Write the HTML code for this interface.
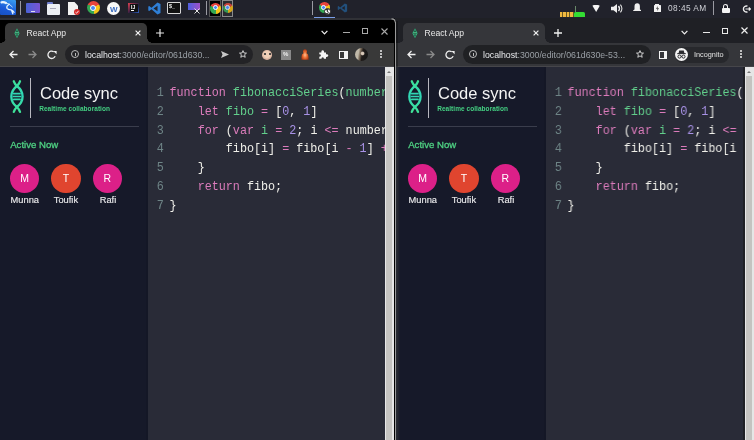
<!DOCTYPE html>
<html><head><meta charset="utf-8">
<style>
*{margin:0;padding:0;box-sizing:border-box}
html,body{width:754px;height:440px;overflow:hidden;background:#21222b;font-family:"Liberation Sans",sans-serif;position:relative;-webkit-font-smoothing:antialiased}
.win,.a{will-change:transform}
.a{position:absolute}
.win{position:absolute;overflow:hidden}
#w1{left:-2px;top:18px;width:398px;height:422px;background:#000;border-top-right-radius:3.5px}
#w2{left:396px;top:18px;width:358px;height:422px;background:#1f2025}
.tab{position:absolute;top:5px;left:7px;width:142px;height:20px;background:#393939;border-radius:5px 5px 0 0}
.tt{position:absolute;left:28.5px;top:9.5px;font-size:8.6px;color:#e8e8e8;white-space:nowrap}
.toolbar{position:absolute;left:0;right:0;top:24.5px;height:24.5px;background:#393939;border-bottom:1px solid #46464a}
.omni{position:absolute;left:67px;top:2.8px;width:187.5px;height:18.6px;background:#232326;border-radius:10px}
.url{position:absolute;left:20px;top:4.3px;font-size:8.76px;color:#9aa0a6;white-space:nowrap}
.url b{font-weight:normal;color:#e8eaed}
.content{position:absolute;left:0;right:0;top:49px;bottom:0;background:#292b37}
.side{position:absolute;left:0;top:0;bottom:0;width:148px;background:#161929}
.side2{position:absolute;left:148px;top:0;bottom:0;width:2px;background:#141726}
.code{position:absolute;left:160px;top:16.7px;font-family:"Liberation Mono",monospace;font-size:12.3px;transform:scaleX(0.954);transform-origin:0 0;line-height:18.9px;white-space:pre;color:#f0f0ea}
.ln{color:#6e8486;display:inline-block;width:12.05px;position:relative;left:-1.2px}
.k{color:#dc7cbc}
.d{color:#62cf8c}
.n{color:#a892e6}
.scroll{position:absolute;top:49px;bottom:0;width:9px;background:#e6e6e6}
.thumb{position:absolute;left:1px;right:2px;top:9px;bottom:0;background:#c4c3c0}
.ua{position:absolute;left:2.3px;top:4px;width:0;height:0;border-left:2.4px solid transparent;border-right:2.4px solid transparent;border-bottom:2.4px solid #777}
.logo-t{position:absolute;left:42px;top:16.8px;font-size:16.5px;color:#f4f4f4;white-space:nowrap}
.logo-s{position:absolute;left:41.2px;top:37.7px;font-size:6.5px;font-weight:bold;color:#44d083;letter-spacing:0.05px;white-space:nowrap}
.vl{position:absolute;left:32px;top:11px;width:1.3px;height:40px;background:#b8b8c0}
.hr{position:absolute;left:12px;top:58.6px;width:129px;height:1px;background:#3a3d4c}
.an{position:absolute;left:12.2px;top:71.5px;font-size:9.6px;color:#4fd283;-webkit-text-stroke:0.3px #4fd283;white-space:nowrap}
.av{position:absolute;top:96.5px;width:29.6px;height:29.6px;border-radius:50%;color:#fff;font-size:10.5px;text-align:center;line-height:29.6px}
.nm{position:absolute;top:128px;font-size:9.3px;color:#e8e8ea;-webkit-text-stroke:0.15px #e8e8ea;white-space:nowrap}
.ico{position:absolute}
</style></head><body>

<!-- ============ TASKBAR ============ -->
<div class="a" style="left:0;top:0;width:15.5px;height:15px;background:linear-gradient(200deg,#3aa0f0,#1a5ad8 60%,#1850c0);border-radius:1px"></div>
<svg class="a" style="left:0;top:0" width="16" height="16" viewBox="0 0 16 16"><path d="M1.5 2.3 Q4 1.8 6 3" stroke="#e8f4ff" stroke-width="2.2" fill="none" stroke-linecap="round"/><path d="M5.5 2.8 Q9 3 12.6 7.2" stroke="#d0ecff" stroke-width="0.9" fill="none"/><path d="M9.3 4.2 Q6 6 7 8.3 Q8 9.6 11 9.8 Q13 10.3 14 12.3 M11.5 10 L12.8 13.8" stroke="#e0f2ff" stroke-width="1.3" fill="none" stroke-linecap="round"/></svg>
<div class="a" style="left:19.8px;top:1.2px;width:1px;height:14.3px;background:#9a9aa2"></div>
<div class="a" style="left:26.3px;top:3.2px;width:13.5px;height:9.5px;background:linear-gradient(90deg,#4a62d8,#7a54d0);border-radius:1px"></div>
<div class="a" style="left:31px;top:10.5px;width:3.5px;height:1px;background:#dde"></div>
<div class="a" style="left:47px;top:3.5px;width:12.7px;height:10.5px;background:#eceff4;border-radius:1px"></div>
<div class="a" style="left:47px;top:2px;width:6px;height:2px;background:#6f7fd0;border-radius:1px 1px 0 0"></div>
<div class="a" style="left:50px;top:7.5px;width:6px;height:1px;background:#aab"></div>
<div class="a" style="left:68px;top:2px;width:10px;height:12.9px;background:#f2f2f2;clip-path:polygon(0 0,65% 0,100% 30%,100% 100%,0 100%)"></div>
<div class="a" style="left:74.2px;top:8.6px;width:6px;height:6px;background:#d42a2a;border-radius:50%"></div><svg class="a" style="left:74.2px;top:8.6px" width="6" height="6" viewBox="0 0 6 6"><path d="M1.5 3.2 L2.6 4.2 L4.6 1.8" stroke="#fff" stroke-width="0.9" fill="none"/></svg>
<div class="a" style="left:86.9px;top:1.4px;width:13px;height:13px;border-radius:50%;background:conic-gradient(from 0deg,#e8453c 0 60deg,#f5c518 60deg 180deg,#34a853 180deg 300deg,#e8453c 300deg)"></div>
<div class="a" style="left:90.4px;top:4.9px;width:6px;height:6px;border-radius:50%;background:#4a8af4;border:1.2px solid #fff"></div>
<div class="a" style="left:106.9px;top:1.5px;width:13px;height:13px;border-radius:50%;background:#f8f8f8"></div>
<div class="a" style="left:109.5px;top:5px;font-size:8px;font-weight:bold;color:#3a6cc0">W</div>
<div class="a" style="left:127.8px;top:2.8px;width:11px;height:10.2px;background:linear-gradient(135deg,#e04050,#1a1a40 60%,#3060c0)"></div>
<div class="a" style="left:129.5px;top:4.2px;width:7.5px;height:7.5px;background:#111"></div>
<div class="a" style="left:130.5px;top:3.8px;font-size:5px;font-weight:bold;color:#fff">IJ</div>
<div class="a" style="left:130.5px;top:10px;width:3px;height:.8px;background:#fff"></div>
<svg class="a" style="left:147.5px;top:2px" width="13" height="13" viewBox="0 0 13 13"><path d="M9.5 0.5 L12.5 2 V11 L9.5 12.5 L3.5 7.2 L1.2 9 L0.3 8.4 V4.6 L1.2 4 L3.5 5.8 Z M9.5 3.8 L5.5 6.5 L9.5 9.2 Z" fill="#2f7fd6" fill-rule="evenodd"/></svg>
<div class="a" style="left:166.8px;top:1.9px;width:13.9px;height:12px;background:#111;border:1.2px solid #d8d8d8;border-radius:1px"></div>
<div class="a" style="left:168.8px;top:2.5px;font-size:5.5px;font-weight:bold;color:#eee">$_</div>
<div class="a" style="left:187.8px;top:3.2px;width:12.2px;height:7px;background:linear-gradient(90deg,#5060e0,#a050c8)"></div>
<svg class="a" style="left:194px;top:8px" width="6" height="6" viewBox="0 0 6 6"><path d="M0.5 0.5 L5.5 5.5 M5.5 0.5 L0.5 5.5" stroke="#e0e0e0" stroke-width="1"/></svg>
<div class="a" style="left:206px;top:1.2px;width:1px;height:14.3px;background:#9a9aa2"></div>
<div class="a" style="left:209.3px;top:0;width:12px;height:16.7px;background:#000;border:0.8px solid #555"></div>
<div class="a" style="left:210px;top:2.6px;width:10.5px;height:10.5px;border-radius:50%;background:conic-gradient(from 0deg,#e8453c 0 60deg,#f5c518 60deg 180deg,#34a853 180deg 300deg,#e8453c 300deg)"></div>
<div class="a" style="left:212.8px;top:5.4px;width:5px;height:5px;border-radius:50%;background:#4a8af4;border:1px solid #fff"></div>
<div class="a" style="left:222px;top:0;width:10.7px;height:16.7px;background:#2a2b30;border:0.8px solid #8a8a8a"></div>
<div class="a" style="left:222.5px;top:2.6px;width:10px;height:10px;border-radius:50%;background:conic-gradient(from 0deg,#c8453c 0 60deg,#d5a518 60deg 180deg,#349853 180deg 300deg,#c8453c 300deg)"></div>
<div class="a" style="left:225.2px;top:5.2px;width:4.8px;height:4.8px;border-radius:50%;background:#4a8af4;border:1px solid #ddd"></div>
<div class="a" style="left:311.6px;top:1.2px;width:1px;height:14.3px;background:#9a9aa2"></div>
<div class="a" style="left:318.5px;top:2.4px;width:10.5px;height:10.5px;border-radius:50%;background:conic-gradient(from 0deg,#e8453c 0 60deg,#f5c518 60deg 180deg,#34a853 180deg 300deg,#e8453c 300deg)"></div>
<div class="a" style="left:321.3px;top:5.2px;width:5px;height:5px;border-radius:50%;background:#4a8af4;border:1px solid #fff"></div>
<div class="a" style="left:323.6px;top:7.6px;width:7.4px;height:7.4px;border-radius:50%;background:#fff;border:0.8px solid #222"></div><svg class="a" style="left:325.3px;top:9.3px" width="4" height="5" viewBox="0 0 4 5"><path d="M0.5 0.6 H3.2 L1.8 2.1 Q3.4 2.2 3.3 3.4 Q3.2 4.6 1.8 4.6 Q0.8 4.6 0.4 4" stroke="#111" stroke-width="0.9" fill="none"/></svg>
<div class="a" style="left:314px;top:16.5px;width:20.6px;height:1.2px;background:#7a9ee8"></div>
<svg class="a" style="left:337.4px;top:3.3px" width="11" height="10" viewBox="0 0 13 13"><path d="M9.5 0.5 L12.5 2 V11 L9.5 12.5 L3.5 7.2 L1.2 9 L0.3 8.4 V4.6 L1.2 4 L3.5 5.8 Z M9.5 3.8 L5.5 6.5 L9.5 9.2 Z" fill="#22507c" fill-rule="evenodd"/></svg>
<!-- tray -->
<div class="a" style="left:559.5px;top:12px;width:14px;height:5px;background:repeating-linear-gradient(90deg,#f0b840 0 2.5px,#6a5a20 2.5px 3.5px)"></div>
<div class="a" style="left:574px;top:11.8px;width:10.6px;height:5.3px;background:#33dd33;border-radius:1.5px 1.5px 0 0"></div>
<div class="a" style="left:575.2px;top:6.4px;width:.7px;height:6px;background:#6a8a6a"></div>
<div class="a" style="left:591.8px;top:4.8px;width:8.3px;height:7px;background:#f4f4f4;clip-path:polygon(0 0,100% 0,50% 100%);border-radius:2px"></div>
<svg class="a" style="left:611px;top:4.4px" width="12" height="9" viewBox="0 0 12 9"><path d="M0 2.8 H2.5 L6 0 V9 L2.5 6.2 H0 Z" fill="#eee"/><path d="M7.5 2 Q9.4 4.5 7.5 7" stroke="#eee" stroke-width="1.4" fill="none"/><path d="M9.4 0.6 Q12.4 4.5 9.4 8.4" stroke="#ddd" stroke-width="1.1" fill="none"/></svg>
<svg class="a" style="left:632.8px;top:3.2px" width="8.4" height="8" viewBox="0 0 8.4 8"><path d="M1.5 6.5 V3.5 Q1.5 0.3 4.2 0.3 Q6.9 0.3 6.9 3.5 V6.5 L8.2 7.2 V7.9 H0.2 V7.2 Z" fill="#eee"/></svg>
<div class="a" style="left:653.5px;top:4.6px;width:6.8px;height:7.4px;background:#f2f2f2;border-radius:.5px"></div>
<div class="a" style="left:655px;top:4px;width:3.8px;height:1px;background:#f2f2f2"></div>
<svg class="a" style="left:654.5px;top:6px" width="5" height="5" viewBox="0 0 5 5"><path d="M3 0 L1 2.8 H2.6 L2 5 L4 2.2 H2.4 Z" fill="#222"/></svg>
<div class="a" style="left:667.5px;top:3.3px;font-size:8.3px;letter-spacing:0.45px;color:#cfd0d6;white-space:nowrap">08:45 AM</div>
<div class="a" style="left:713.2px;top:1.2px;width:1px;height:14.3px;background:#9a9aa2"></div>
<div class="a" style="left:721.7px;top:7.6px;width:8.1px;height:4.9px;background:#f4f4f4;border-radius:1px"></div>
<div class="a" style="left:723.2px;top:4.2px;width:5.1px;height:5px;border:1.3px solid #f4f4f4;border-bottom:none;border-radius:3px 3px 0 0"></div>
<svg class="a" style="left:742px;top:5.2px" width="9" height="8" viewBox="0 0 9 8"><path d="M5.5 1.2 A3 3 0 1 0 5.5 6.8" stroke="#eee" stroke-width="1.4" fill="none"/><path d="M3.5 4 H8.5 M6.8 2.5 L8.5 4 L6.8 5.5" stroke="#eee" stroke-width="1.2" fill="none"/></svg>

<!-- ============ LEFT WINDOW ============ -->
<div id="w1" class="win">
  <div class="a" style="left:0;top:0;right:0;height:1.6px;background:#303136"></div>
  <div class="tab"></div>
  <div class="a" style="left:149px;top:21px;width:3.5px;height:3.5px;background:radial-gradient(circle at 100% 0,#000 3.3px,#393939 3.6px)"></div>
  <div class="a" style="left:3.5px;top:21px;width:3.5px;height:3.5px;background:radial-gradient(circle at 0 0,#000 3.3px,#393939 3.6px)"></div>
  <svg class="ico" style="left:15.8px;top:9.8px" width="6" height="10.5" viewBox="0 0 6 10.5"><path d="M3 0.3 L5.6 5.25 L3 10.2 L0.4 5.25 Z" fill="#2fae78"/><path d="M3 1.8 L4.4 5.25 L3 8.7 L1.6 5.25 Z" fill="#1c3a30"/><path d="M1.5 4.5 H4.5 M1.5 6 H4.5" stroke="#5fe0a0" stroke-width=".7"/></svg>
  <div class="tt">React App</div>
  <svg class="ico" style="left:136.8px;top:11.6px" width="6" height="6" viewBox="0 0 6 6"><path d="M0.6 0.6 L5.4 5.4 M5.4 0.6 L0.6 5.4" stroke="#eee" stroke-width="1.2"/></svg>
  <svg class="ico" style="left:158.3px;top:10.6px" width="8" height="8" viewBox="0 0 8 8"><path d="M4 0 V8 M0 4 H8" stroke="#e8e8e8" stroke-width="1.2"/></svg>
  <svg class="ico" style="left:322.5px;top:12px" width="7" height="5" viewBox="0 0 7 5"><path d="M0.6 0.8 L3.5 3.8 L6.4 0.8" stroke="#f0f0f0" stroke-width="1.2" fill="none"/></svg>
  <div class="a" style="left:344.5px;top:14.4px;width:6.5px;height:1.1px;background:#a8a8a8"></div>
  <div class="a" style="left:364.3px;top:10px;width:5.6px;height:5.6px;border:1.1px solid #a8a8a8"></div>
  <svg class="ico" style="left:382.5px;top:9.5px" width="7" height="7" viewBox="0 0 7 7"><path d="M0.5 0.5 L6.5 6.5 M6.5 0.5 L0.5 6.5" stroke="#a8a8a8" stroke-width="1.1"/></svg>
  <div class="toolbar">
    <svg class="ico" style="left:10.5px;top:7.5px" width="9" height="9" viewBox="0 0 9 9"><path d="M8.5 4.5 H1 M4.5 1 L1 4.5 L4.5 8" stroke="#eee" stroke-width="1.3" fill="none"/></svg>
    <svg class="ico" style="left:29.7px;top:7.5px" width="9" height="9" viewBox="0 0 9 9"><path d="M0.5 4.5 H8 M4.5 1 L8 4.5 L4.5 8" stroke="#8a8a8a" stroke-width="1.3" fill="none"/></svg>
    <svg class="ico" style="left:48.5px;top:7.5px" width="10" height="10" viewBox="0 0 10 10"><path d="M8.15 6.13 A3.7 3.7 0 1 1 6.7 1.7" stroke="#eee" stroke-width="1.3" fill="none"/><path d="M9.6 0.9 V4.3 L6.2 0.9 Z" fill="#eee"/></svg>
    <div class="omni">
      <div class="a" style="left:6px;top:5.1px;width:8.4px;height:8.4px;border:1px solid #bbb;border-radius:50%"></div>
      <div class="a" style="left:9.7px;top:7.8px;width:1px;height:3.2px;background:#bbb"></div>
      <div class="url"><b>localhost</b>:3000/editor/061d630...</div>
      <svg class="ico" style="left:155.5px;top:5.5px" width="8" height="7" viewBox="0 0 8 7"><path d="M0 0 L8 3.5 L0 7 L1.5 3.5 Z" fill="#c8c8c8"/></svg>
      <svg class="ico" style="left:173.5px;top:5px" width="8" height="8" viewBox="0 0 8 8"><path d="M4 0.6 L5 3 L7.5 3.1 L5.6 4.7 L6.2 7.3 L4 5.9 L1.8 7.3 L2.4 4.7 L0.5 3.1 L3 3 Z" stroke="#ddd" stroke-width="0.9" fill="none" stroke-linejoin="round"/></svg>
    </div>
    <div class="a" style="left:264px;top:7px;width:9.5px;height:9.5px;border-radius:50%;background:radial-gradient(circle at 50% 45%,#f0d0b8 40%,#c8a090 75%,#80a0b0)"></div><div class="a" style="left:265.5px;top:10.5px;width:1.5px;height:1.5px;background:#333;border-radius:50%"></div><div class="a" style="left:270.7px;top:10.5px;width:1.5px;height:1.5px;background:#333;border-radius:50%"></div>
    <div class="a" style="left:282.8px;top:7.3px;width:9.8px;height:9.5px;background:#8a8a8a"></div>
    <div class="a" style="left:284.8px;top:8.8px;font-size:6px;font-weight:bold;color:#f0f0f0">%</div>
    <svg class="a" style="left:303.4px;top:6.6px" width="8" height="11" viewBox="0 0 8 11"><defs><radialGradient id="og" cx=".5" cy=".55" r=".6"><stop offset="0" stop-color="#ffc090"/><stop offset=".5" stop-color="#e86a30"/><stop offset="1" stop-color="#a03010"/></radialGradient></defs><path d="M4 0.3 Q6 0.3 6 2.5 Q6 3.6 5.3 4 Q7.6 5 7.6 8 V10.7 H0.4 V8 Q0.4 5 2.7 4 Q2 3.6 2 2.5 Q2 0.3 4 0.3 Z" fill="url(#og)"/></svg>
    <svg class="ico" style="left:321px;top:7.6px" width="9.5" height="9" viewBox="0 0 9.5 9"><path d="M0.3 2.6 H2.3 Q2.1 0.2 3.7 0.2 Q5.3 0.2 5.1 2.6 H7 V4.3 Q9.3 4.1 9.3 5.6 Q9.3 7.1 7 6.9 V8.8 H4.9 Q5.1 7.2 3.7 7.2 Q2.3 7.2 2.5 8.8 H0.3 V6.6 Q1.9 6.8 1.9 5.5 Q1.9 4.2 0.3 4.4 Z" fill="#f6f6f6"/></svg>
    <div class="a" style="left:340.6px;top:8.6px;width:8.4px;height:7.5px;border:1.3px solid #f4f4f4"></div>
    <div class="a" style="left:345.5px;top:8.6px;width:3.5px;height:7.5px;background:#f4f4f4"></div>
    <div class="a" style="left:357px;top:5.8px;width:13px;height:13px;border-radius:50%;background:radial-gradient(circle at 58% 42%,#d8c8b8 0 12%,transparent 22%),linear-gradient(100deg,#c0b8a8 0 28%,#7a6a58 40%,#201c1a 55%,#151515 100%)"></div>
    <div class="a" style="left:382.3px;top:7.7px;width:1.6px;height:1.6px;background:#ddd;border-radius:50%;box-shadow:0 3px 0 #ddd,0 6px 0 #ddd"></div>
  </div>
  <div class="content">
    <div class="side">
      <svg class="ico" style="left:6px;top:9px" width="26" height="42" viewBox="0 0 26 42"><defs><linearGradient id="g1" x1="0" y1="0" x2="0" y2="42" gradientUnits="userSpaceOnUse"><stop offset="0" stop-color="#45e68c"/><stop offset=".45" stop-color="#2fd6b8"/><stop offset="1" stop-color="#45e68c"/></linearGradient></defs><g stroke="url(#g1)" stroke-width="2.3" fill="none" stroke-linecap="round"><path d="M16 5.3 Q15 8 12.9 10 C7.8 14 7.3 17 7.3 20.5 C7.3 24 7.8 27 12.9 31 Q15 33 16 35.8"/><path d="M9.8 5.3 Q10.8 8 12.9 10 C18 14 18.6 17 18.6 20.5 C18.6 24 18 27 12.9 31 Q10.8 33 9.8 35.8"/><path d="M9.8 17.7 H16 M9.3 20.5 H16.5 M9.8 23.4 H16" stroke-width="1.7"/></g></svg>
      <div class="vl"></div>
      <div class="logo-t">Code sync</div>
      <div class="logo-s">Realtime collaboration</div>
      <div class="hr"></div>
      <div class="an">Active Now</div>
      <div class="av" style="left:11.8px;background:#dc2088">M</div>
      <div class="av" style="left:53.1px;background:#e0452f">T</div>
      <div class="av" style="left:94.6px;background:#dc2088">R</div>
      <div class="nm" style="left:12.6px">Munna</div>
      <div class="nm" style="left:55.8px">Toufik</div>
      <div class="nm" style="left:101.7px">Rafi</div>
    </div>
    <div class="side2"></div>
    <div class="code"><span class="ln">1</span><span class="k">function</span> <span class="d">fibonacciSeries</span>(<span class="d">number</span>) {
<span class="ln">2</span>    <span class="k">let</span> <span class="d">fibo</span> <span class="k">=</span> [<span class="n">0</span>, <span class="n">1</span>]
<span class="ln">3</span>    <span class="k">for</span> (<span class="k">var</span> <span class="d">i</span> <span class="k">=</span> <span class="n">2</span>; i <span class="k">&lt;=</span> number; i<span class="k">++</span>) {
<span class="ln">4</span>        fibo[i] <span class="k">=</span> fibo[i <span class="k">-</span> <span class="n">1</span>] <span class="k">+</span> fibo[i <span class="k">-</span> <span class="n">2</span>];
<span class="ln">5</span>    }
<span class="ln">6</span>    <span class="k">return</span> fibo;
<span class="ln">7</span>}</div>
  </div>
  <div class="scroll" style="left:387px"><div class="ua"></div><div class="thumb"></div></div>
  <div class="a" style="left:395.6px;top:0;width:1px;bottom:0;background:#000"></div>
  <div class="a" style="left:396.6px;top:3.5px;width:1.4px;bottom:0;background:#9a9a9a"></div><svg class="a" style="left:392px;top:0" width="6" height="5" viewBox="0 0 6 5"><path d="M1.5 0.9 Q5.2 0.9 5.3 4.5" stroke="#9a9a9a" stroke-width="1.2" fill="none"/></svg>
</div>

<!-- ============ RIGHT WINDOW ============ -->
<div id="w2" class="win">
  <div class="tab" style="background:#35363a"></div>
  <div class="a" style="left:149px;top:21px;width:3.5px;height:3.5px;background:radial-gradient(circle at 100% 0,#1f2025 3.3px,#35363a 3.6px)"></div>
  <div class="a" style="left:3.5px;top:21px;width:3.5px;height:3.5px;background:radial-gradient(circle at 0 0,#1f2025 3.3px,#35363a 3.6px)"></div>
  <svg class="ico" style="left:15.8px;top:9.8px" width="6" height="10.5" viewBox="0 0 6 10.5"><path d="M3 0.3 L5.6 5.25 L3 10.2 L0.4 5.25 Z" fill="#2fae78"/><path d="M3 1.8 L4.4 5.25 L3 8.7 L1.6 5.25 Z" fill="#1c3a30"/><path d="M1.5 4.5 H4.5 M1.5 6 H4.5" stroke="#5fe0a0" stroke-width=".7"/></svg>
  <div class="tt">React App</div>
  <svg class="ico" style="left:136.5px;top:11.8px" width="6" height="6" viewBox="0 0 6 6"><path d="M0.6 0.6 L5.4 5.4 M5.4 0.6 L0.6 5.4" stroke="#eee" stroke-width="1.2"/></svg>
  <svg class="ico" style="left:158px;top:11px" width="8" height="8" viewBox="0 0 8 8"><path d="M4 0 V8 M0 4 H8" stroke="#f0f0f0" stroke-width="1.3"/></svg>
  <svg class="ico" style="left:284.5px;top:12px" width="7" height="5" viewBox="0 0 7 5"><path d="M0.6 0.8 L3.5 3.8 L6.4 0.8" stroke="#f0f0f0" stroke-width="1.2" fill="none"/></svg>
  <div class="a" style="left:306.5px;top:14.4px;width:6.5px;height:1.3px;background:#e8e8e8"></div>
  <div class="a" style="left:326.3px;top:10px;width:5.6px;height:5.6px;border:1.3px solid #e8e8e8"></div>
  <svg class="ico" style="left:344.8px;top:9.2px" width="7" height="7" viewBox="0 0 7 7"><path d="M0.5 0.5 L6.5 6.5 M6.5 0.5 L0.5 6.5" stroke="#eee" stroke-width="1.2"/></svg>
  <div class="toolbar" style="background:#35363a">
    <svg class="ico" style="left:10.5px;top:7.5px" width="9" height="9" viewBox="0 0 9 9"><path d="M8.5 4.5 H1 M4.5 1 L1 4.5 L4.5 8" stroke="#eee" stroke-width="1.3" fill="none"/></svg>
    <svg class="ico" style="left:29.7px;top:7.5px" width="9" height="9" viewBox="0 0 9 9"><path d="M0.5 4.5 H8 M4.5 1 L8 4.5 L4.5 8" stroke="#8a8a8a" stroke-width="1.3" fill="none"/></svg>
    <svg class="ico" style="left:48.5px;top:7.5px" width="10" height="10" viewBox="0 0 10 10"><path d="M8.15 6.13 A3.7 3.7 0 1 1 6.7 1.7" stroke="#eee" stroke-width="1.3" fill="none"/><path d="M9.6 0.9 V4.3 L6.2 0.9 Z" fill="#eee"/></svg>
    <div class="omni" style="background:#202124">
      <div class="a" style="left:6px;top:5.1px;width:8.4px;height:8.4px;border:1px solid #bbb;border-radius:50%"></div>
      <div class="a" style="left:9.7px;top:7.8px;width:1px;height:3.2px;background:#bbb"></div>
      <div class="url"><b>localhost</b>:3000/editor/061d630e-53...</div>
      <svg class="ico" style="left:172.5px;top:5px" width="8" height="8" viewBox="0 0 8 8"><path d="M4 0.6 L5 3 L7.5 3.1 L5.6 4.7 L6.2 7.3 L4 5.9 L1.8 7.3 L2.4 4.7 L0.5 3.1 L3 3 Z" stroke="#ddd" stroke-width="0.9" fill="none" stroke-linejoin="round"/></svg>
    </div>
    <div class="a" style="left:263.2px;top:8.6px;width:7.5px;height:7.5px;border:1.3px solid #f4f4f4"></div>
    <div class="a" style="left:267.5px;top:8.6px;width:3.2px;height:7.5px;background:#f4f4f4"></div>
    <div class="a" style="left:278.5px;top:4.6px;width:54px;height:15.5px;border-radius:8px;background:#27282c"></div>
    <div class="a" style="left:279.3px;top:5.7px;width:13px;height:13px;border-radius:50%;background:#f4f4f4"></div>
    <svg class="ico" style="left:279.3px;top:5.7px" width="13" height="13" viewBox="0 0 13 13"><path d="M4.2 2.6 H8.8 L9.4 5.2 H3.6 Z" fill="#2a2a2e"/><path d="M2.3 5.6 H10.7" stroke="#2a2a2e" stroke-width="1.1"/><circle cx="4.5" cy="8.6" r="1.55" stroke="#2a2a2e" stroke-width="1" fill="none"/><circle cx="8.5" cy="8.6" r="1.55" stroke="#2a2a2e" stroke-width="1" fill="none"/><path d="M6 8.4 H7" stroke="#2a2a2e" stroke-width=".9"/></svg>
    <div class="a" style="left:297.9px;top:7.5px;font-size:7.3px;color:#e0e0e0;white-space:nowrap">Incognito</div>
    <div class="a" style="left:344px;top:7.7px;width:1.6px;height:1.6px;background:#ddd;border-radius:50%;box-shadow:0 3px 0 #ddd,0 6px 0 #ddd"></div>
  </div>
  <div class="content" style="right:10.6px;overflow:hidden">
    <div class="side">
      <svg class="ico" style="left:6px;top:9px" width="26" height="42" viewBox="0 0 26 42"><defs><linearGradient id="g2" x1="0" y1="0" x2="0" y2="42" gradientUnits="userSpaceOnUse"><stop offset="0" stop-color="#45e68c"/><stop offset=".45" stop-color="#2fd6b8"/><stop offset="1" stop-color="#45e68c"/></linearGradient></defs><g stroke="url(#g2)" stroke-width="2.3" fill="none" stroke-linecap="round"><path d="M16 5.3 Q15 8 12.9 10 C7.8 14 7.3 17 7.3 20.5 C7.3 24 7.8 27 12.9 31 Q15 33 16 35.8"/><path d="M9.8 5.3 Q10.8 8 12.9 10 C18 14 18.6 17 18.6 20.5 C18.6 24 18 27 12.9 31 Q10.8 33 9.8 35.8"/><path d="M9.8 17.7 H16 M9.3 20.5 H16.5 M9.8 23.4 H16" stroke-width="1.7"/></g></svg>
      <div class="vl"></div>
      <div class="logo-t">Code sync</div>
      <div class="logo-s">Realtime collaboration</div>
      <div class="hr"></div>
      <div class="an">Active Now</div>
      <div class="av" style="left:11.8px;background:#dc2088">M</div>
      <div class="av" style="left:53.1px;background:#e0452f">T</div>
      <div class="av" style="left:94.6px;background:#dc2088">R</div>
      <div class="nm" style="left:12.6px">Munna</div>
      <div class="nm" style="left:55.8px">Toufik</div>
      <div class="nm" style="left:101.7px">Rafi</div>
    </div>
    <div class="side2"></div>
    <div class="code"><span class="ln">1</span><span class="k">function</span> <span class="d">fibonacciSeries</span>(<span class="d">number</span>) {
<span class="ln">2</span>    <span class="k">let</span> <span class="d">fibo</span> <span class="k">=</span> [<span class="n">0</span>, <span class="n">1</span>]
<span class="ln">3</span>    <span class="k">for</span> (<span class="k">var</span> <span class="d">i</span> <span class="k">=</span> <span class="n">2</span>; i <span class="k">&lt;=</span> number; i<span class="k">++</span>) {
<span class="ln">4</span>        fibo[i] <span class="k">=</span> fibo[i <span class="k">-</span> <span class="n">1</span>] <span class="k">+</span> fibo[i <span class="k">-</span> <span class="n">2</span>];
<span class="ln">5</span>    }
<span class="ln">6</span>    <span class="k">return</span> fibo;
<span class="ln">7</span>}</div>
  </div>
  <div class="scroll" style="left:348.5px;width:9.5px"><div class="ua"></div><div class="thumb"></div></div>
  <div class="a" style="left:0;top:49px;bottom:0;width:3.5px;background:linear-gradient(90deg,#2a2d35,#22252f 50%,#161929)"></div>
  <div class="a" style="left:0;top:3px;height:46px;width:1.6px;background:rgba(0,0,0,.28)"></div>
</div>
</body></html>
